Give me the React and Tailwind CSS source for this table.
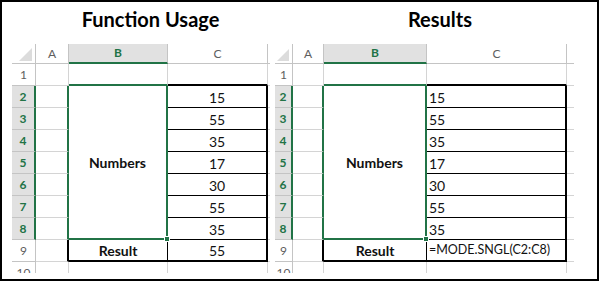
import React from 'react';

const GRID = 'border-[#d4d4d4]';
const HEAD = 'border-[#c4c4c4]';

function Corner({ size }) {
    return (
        <div className={`flex items-end justify-end pr-[3px] pb-[2px] border-r border-b ${HEAD} bg-white`}>
            <svg width={size} height={size} viewBox="0 0 12 12">
                <polygon points="12,0 12,12 0,12" fill="#dcdcdc" />
            </svg>
        </div>
    );
}

function ColHead({ label, active }) {
    if (active) {
        return (
            <div className={`flex items-center justify-center bg-[#e1e1e1] border-r ${HEAD} border-b-2 border-b-[#217346] text-[12px] font-bold text-[#217346]`}>
                {label}
            </div>
        );
    }
    return (
        <div className={`flex items-center justify-center border-r border-b ${HEAD} text-[12px] text-[#5e5e5e]`}>
            {label}
        </div>
    );
}

function RowHead({ n }) {
    return (
        <div className={`flex items-center justify-center border-r border-b ${HEAD} text-[12px] text-[#5e5e5e]`}>
            {n}
        </div>
    );
}

function Sheet({ gridClass, corner, values, result, left }) {
    const align = left ? 'justify-start pl-[2px]' : 'justify-center';
    const resultSize = left ? 'text-[12.5px]' : 'text-[14px]';
    return (
        <div className={`grid ${gridClass} grid-rows-[20px_22px_22px_22px_22px_22px_22px_22px_22px_22px_11px]`}>
            {/* header row */}
            <Corner size={corner} />
            <ColHead label="A" />
            <ColHead label="B" active />
            <ColHead label="C" />
            <div className={`border-b ${HEAD}`}></div>

            {/* row 1 */}
            <RowHead n="1" />
            <div className={`border-r border-b ${GRID}`}></div>
            <div className={`border-r ${GRID} border-b-2 border-b-[#217346]`}></div>
            <div className={`border-r ${GRID} border-b-2 border-b-black`}></div>
            <div className={`border-b ${GRID}`}></div>

            {/* rows 2-8 */}
            {values.map((v, i) => (
                <React.Fragment key={i}>
                    <div className="col-start-1 flex items-center justify-center bg-[#e1e1e1] border-r-2 border-r-[#217346] border-b border-b-[#c4c4c4] text-[12px] font-bold text-[#217346]" style={{ gridRow: i + 3 }}>
                        {i + 2}
                    </div>
                    <div className="col-start-2 border-r-2 border-r-[#217346] border-b border-b-[#d4d4d4]" style={{ gridRow: i + 3 }}></div>
                    <div className={`col-start-4 flex items-center ${align} pt-[1px] border-r-2 border-r-black border-b border-b-black text-[14px] text-[#111]`} style={{ gridRow: i + 3 }}>
                        {v}
                    </div>
                    <div className={`col-start-5 border-b ${GRID}`} style={{ gridRow: i + 3 }}></div>
                </React.Fragment>
            ))}
            <div className="relative col-start-3 row-start-3 row-span-7 flex items-center justify-center border-r-2 border-r-[#217346] border-b-2 border-b-[#217346] text-[14px] font-bold text-[#111]">
                Numbers
                <span className="absolute -right-[4px] -bottom-[4px] z-10 w-[6px] h-[6px] bg-[#217346] border border-white"></span>
            </div>

            {/* row 9 */}
            <div className={`col-start-1 row-start-10 flex items-center justify-center border-r border-b ${HEAD} text-[12px] text-[#5e5e5e]`}>9</div>
            <div className={`col-start-2 row-start-10 border-r-2 border-r-black border-b ${GRID}`}></div>
            <div className="col-start-3 row-start-10 flex items-center justify-center pt-[1px] border-r border-r-black border-b-2 border-b-black text-[14px] font-bold text-[#111]">
                Result
            </div>
            <div className={`col-start-4 row-start-10 flex items-center ${align} pt-[1px] border-r-2 border-r-black border-b-2 border-b-black ${resultSize} text-[#111]`}>
                {result}
            </div>
            <div className={`col-start-5 row-start-10 border-b ${GRID}`}></div>

            {/* row 10, cut off by the screenshot edge */}
            <div className={`col-start-1 row-start-11 overflow-hidden border-r ${HEAD}`}>
                <div className="h-[22px] flex items-center justify-center text-[12px] text-[#5e5e5e]">10</div>
            </div>
            <div className={`col-start-2 row-start-11 border-r ${GRID}`}></div>
            <div className={`col-start-3 row-start-11 border-r ${GRID}`}></div>
            <div className={`col-start-4 row-start-11 border-r ${GRID}`}></div>
        </div>
    );
}

const NUMS = ['15', '55', '35', '17', '30', '55', '35'];

export default function App() {
    return (
        <div className="w-[599px] h-[281px] border-2 border-black bg-white flex font-[Lato,sans-serif] overflow-hidden">
            <div className="w-[273px] shrink-0 flex flex-col">
                <div className="h-[42px] pt-[5px] pl-[24px] text-center text-[20px] leading-6 font-bold text-black">
                    Function Usage
                </div>
                <div className="pl-[10px]">
                    <Sheet
                        gridClass="grid-cols-[24px_33px_99px_100px_2px]"
                        corner={13}
                        values={NUMS}
                        result="55"
                    />
                </div>
            </div>
            <div className="flex-1 flex flex-col">
                <div className="h-[42px] pt-[5px] pl-[8px] text-center text-[20px] leading-6 font-bold text-black">
                    Results
                </div>
                <div>
                    <Sheet
                        gridClass="grid-cols-[18px_31px_103px_140px_7px]"
                        corner={12}
                        values={NUMS}
                        result="=MODE.SNGL(C2:C8)"
                        left
                    />
                </div>
            </div>
        </div>
    );
}
